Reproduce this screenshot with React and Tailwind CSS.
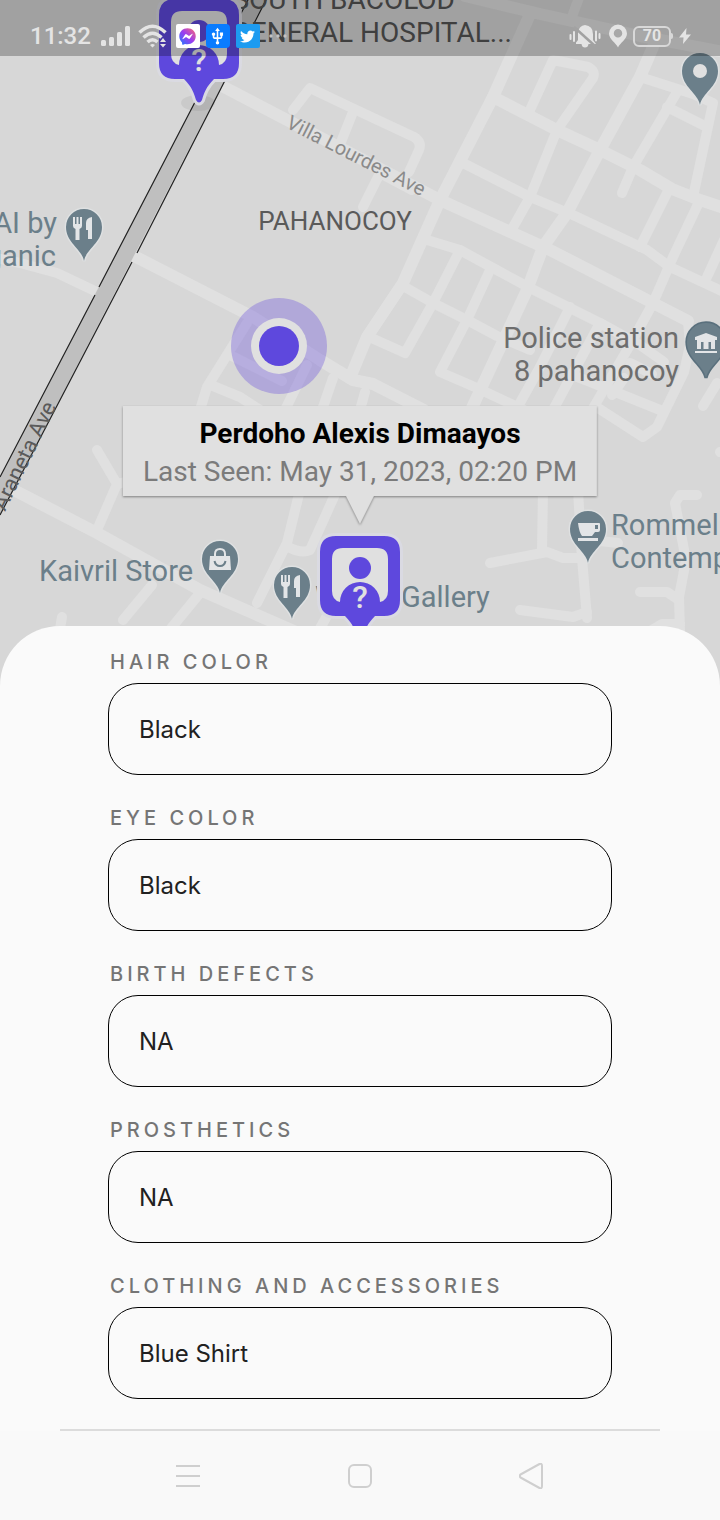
import React from "react";
import { FaFacebookMessenger, FaTwitter } from "react-icons/fa";
import { MdUsb } from "react-icons/md";

const fields = [
  { id: "hair", label: "HAIR COLOR", value: "Black" },
  { id: "eye", label: "EYE COLOR", value: "Black" },
  { id: "birth", label: "BIRTH DEFECTS", value: "NA" },
  { id: "prosthetics", label: "PROSTHETICS", value: "NA" },
  { id: "clothing", label: "CLOTHING AND ACCESSORIES", value: "Blue Shirt" },
];

const wideRoads = [
  "M531 12 L493 97 L440 200 L403 283 L367 337 L350 378",
  "M222 86 L440 200 L550 250 L653 303 L688 321",
  "M134 256 L253 317 L320 360 L353 380 L373 384 L424 410",
  "M465 -4 L540 14 L640 36 L724 52",
  "M493 97 L557 130 L600 150 L640 170 L672 189 L700 200 L724 208",
  "M653 47 L640 77 L600 150 L567 213 L543 247 L527 290 L471 410",
  "M8 487 L97 533 L200 590 L296 632",
];

const roads = [
  "M580 -5 L573 14",
  "M293 110 L310 88 L352 108 L414 137 Q422 142 419 150 L409 172",
  "M353 112 L341 142",
  "M412 190 L380 173 L363 207",
  "M530 110 L553 60 L588 67 Q596 71 593 78 L557 130 L530 197 L512 229",
  "M640 77 L693 94 L713 103 L693 197",
  "M677 92 L653 133 L633 167 L622 193",
  "M667 107 L707 127",
  "M463 163 L530 197 L573 215 L647 250 L670 267 L724 292",
  "M667 193 L640 247",
  "M700 200 L673 257 L653 303 L630 345 L592 410",
  "M724 240 L707 277",
  "M427 240 L460 250 L493 268 L530 288 L570 308 L600 323 L640 345 L664 362",
  "M403 286 L433 303 L467 320 L497 336 L530 350",
  "M460 250 L433 303 L405 353 L367 336",
  "M490 270 L467 320 L440 372 L477 388 L524 410",
  "M570 307 L540 367 L516 410",
  "M600 323 L553 410",
  "M575 376 L593 383 L660 410",
  "M630 363 L652 374",
  "M688 321 L690 345 L684 372 L657 427 L643 437 L598 408",
  "M612 395 L624 378",
  "M717 383 L703 406",
  "M247 323 L207 387 L200 410",
  "M232 356 L282 381",
  "M213 386 L240 397 L260 410",
  "M307 365 L285 410",
  "M333 378 L322 410",
  "M365 392 L360 410",
  "M-4 258 L20 263 L57 273 L97 292",
  "M97 450 L117 484 L97 530",
  "M117 484 L150 476",
  "M152 585 L123 620",
  "M200 593 L168 632",
  "M62 617 L58 640",
  "M300 490 L287 543 L257 603",
  "M337 490 L310 550 Q302 554 288 547",
  "M328 614 L318 632",
  "M543 490 L542 550",
  "M490 563 L547 552 L563 558 L582 558 L587 618",
  "M578 490 L582 560",
  "M520 610 L573 617 L587 612",
  "M600 541 L618 543",
  "M697 495 L680 495 L675 503 L686 560 L679 597 L680 632",
  "M640 592 L667 592 L679 600",
  "M652 630 L662 624 L680 624",
  "M720 452 L730 450",
];

const glyphs = {
  food: (
    <g fill="#e3e5e7">
      <path d="M-11 -10h2v7h1.500v-7h2v7h1.500v-7h2v9q0 2-2.500 3v11h-4v-11q-2.500-1-2.500-3z" />
      <path d="M8 -10v22h-4v-9h-2v-7q0-5 6-6z" />
    </g>
  ),
  bag: (
    <g>
      <path d="M-10 -3h20l1 14h-22z" fill="#e3e5e7" />
      <path d="M-5 -2v-3q0-5 5-5t5 5v3" fill="none" stroke="#e3e5e7" strokeWidth="2" />
      <path d="M-5.500 2q1 5 5.500 5t5.500-5" fill="none" stroke="#6b7f8a" strokeWidth="2" />
    </g>
  ),
  cup: (
    <g fill="#e3e5e7">
      <path d="M-10 -6h21q1 0 1 1v6q0 2-2 2h-3l-3 4h-10q-3-4-4-13zM7 -4v4h3v-4z" fillRule="evenodd" />
      <path d="M-10 9h20v3h-20z" />
    </g>
  ),
  bank: (
    <g fill="#e3e5e7">
      <path d="M-11 -5l11-4l11 4v3h-22zM-9 -2h4v9h-4zM-2.500 -2h5v9h-5zM5 -2h4v9h-4zM-9 5h3v2h-3zM-11 9h22v2h-22z" />
      <path d="M-5 -2h10v2h-10z" />
    </g>
  ),
  dot: <circle r="7" fill="#e0e0e0" />,
};

function PlacePin({ x, y, kind, large }) {
  return (
    <g transform={`translate(${x} ${y})`}>
      <g transform={large ? "scale(1.06)" : undefined}>
        <path
          d="M0 34C-2 22 -18 16 -18 0A18 18 0 0 1 18 0C18 16 2 22 0 34Z"
          fill="#6b7f8a"
          stroke={large ? "#5a707d" : "#dfe1e2"}
          strokeWidth="3"
          paintOrder="stroke"
        />
      </g>
      {glyphs[kind]}
    </g>
  );
}

function PersonMarker({ x, y }) {
  return (
    <g transform={`translate(${x} ${y})`}>
      <ellipse cx="-1" cy="104" rx="17" ry="8" fill="#000" opacity="0.06" />
      <path
        d="M-24 0H24Q40 0 40 16V64Q40 80 24 80H15C7 88 5 94 3 101Q0 106 -3 101C-5 94 -7 88 -15 80H-24Q-40 80 -40 64V16Q-40 0 -24 0Z"
        fill="#5e48dd"
        stroke="#dadae2"
        strokeWidth="6"
        paintOrder="stroke"
      />
      <path
        d="M-17 12H17Q28 12 28 23V55Q28 64 20 66A20 20 0 0 0 -20 66Q-28 64 -28 55V23Q-28 12 -17 12Z"
        fill="#e0e0e0"
      />
      <circle cx="0" cy="32" r="11" fill="#5e48dd" />
      <text y="72" textAnchor="middle" className="fill-[#e0e0e0] font-[Roboto,sans-serif] text-[32px] font-medium">
        ?
      </text>
    </g>
  );
}

function MapView() {
  return (
    <svg
      viewBox="0 0 720 690"
      preserveAspectRatio="xMidYMin slice"
      className="block h-full w-full font-[Roboto,sans-serif]"
      role="img"
      aria-label="Map of Pahanocoy"
    >
      <rect width="720" height="690" fill="#d7d7d7" />
      <g fill="none" stroke="#e0e0e0" strokeLinecap="round" strokeLinejoin="round">
        {roads.map((d) => (
          <path key={d} d={d} strokeWidth="10" />
        ))}
        {wideRoads.map((d) => (
          <path key={d} d={d} strokeWidth="12" />
        ))}
      </g>
      <path d="M248 0H266L0 515V477Z" fill="#bfbfbf" />
      <path
        d="M248 0L99 287M95 295L0 477M266 0L137 253M132 262L0 515"
        fill="none"
        stroke="#222"
        strokeWidth="1.200"
      />

      <text transform="translate(285 127) rotate(27)" className="fill-[#8a8a8a] text-[20px]">
        Villa Lourdes Ave
      </text>
      <text transform="translate(5 512) rotate(-64)" className="fill-[#5a5a5a] text-[22px]">
        Araneta Ave
      </text>
      <g className="fill-[#555] text-[28px]">
        <text x="455" y="9" textAnchor="end">SOUTH BACOLOD</text>
        <text x="512" y="42" textAnchor="end">GENERAL HOSPITAL...</text>
      </g>
      <g className="text-[29px]">
        <g className="fill-[#6d6d6d]">
          <text x="679" y="348" textAnchor="end">Police station</text>
          <text x="679" y="381" textAnchor="end">8 pahanocoy</text>
        </g>
        <g className="fill-[#6b7f8a]">
          <text x="57" y="233" textAnchor="end">AI by</text>
          <text x="56" y="266" textAnchor="end">ganic</text>
          <text x="39" y="581">Kaivril Store</text>
          <text x="611" y="535">Rommel</text>
          <text x="611" y="568">Contemp</text>
          <text x="315" y="607">W</text>
          <text x="401" y="607">Gallery</text>
        </g>
      </g>
      <text x="335" y="230" textAnchor="middle" className="fill-[#5a5a5a] text-[26px]">
        PAHANOCOY
      </text>

      <PlacePin x={84} y={227} kind="food" />
      <PlacePin x={220} y={559} kind="bag" />
      <PlacePin x={292} y={585} kind="food" />
      <PlacePin x={588} y={529} kind="cup" />
      <PlacePin x={700} y={71} kind="dot" />
      <PlacePin x={706} y={342} kind="bank" large />

      <circle cx="279" cy="346" r="48" fill="#6a4fdd" opacity="0.35" />
      <circle cx="279" cy="346" r="28" fill="#e0e0e0" />
      <circle cx="279" cy="346" r="20" fill="#5e48dd" />

      <PersonMarker x={199} y={-1} />
      <PersonMarker x={360} y={536} />
    </svg>
  );
}

function SignalIcon() {
  return (
    <svg viewBox="0 0 30 22" className="h-[22px] w-[30px]" fill="#e4e4e4" aria-hidden="true">
      <rect x="0" y="15" width="5" height="6" rx="1.500" />
      <rect x="8" y="12" width="5" height="9" rx="1.500" />
      <rect x="16" y="7" width="5" height="14" rx="1.500" />
      <rect x="24" y="1" width="5" height="20" rx="1.500" />
    </svg>
  );
}

function WifiIcon() {
  return (
    <svg viewBox="0 0 30 24" className="h-6 w-[30px]" fill="none" stroke="#e4e4e4" strokeWidth="3.500" aria-hidden="true">
      <path d="M1.500 8.500Q14.500 -4 27.500 8.500M5.500 13.500Q14.500 5 23.500 13.500M9.500 18Q14.500 13.500 19.500 18" />
      <path d="M12 21Q14.500 19 17 21L14.500 23.500ZM22 18l3-4l3 4zM22 20h6l-3 3.500z" fill="#e4e4e4" stroke="none" />
    </svg>
  );
}

function SilentIcon() {
  return (
    <svg viewBox="0 0 32 24" className="h-6 w-8" aria-hidden="true">
      <path
        d="M16 1Q24 2 24 10V16L27 20H19.500Q19 23.500 16 23.500T12.500 20H7V18.500L9 16V8Q10 2 16 1Z"
        fill="#e4e4e4"
      />
      <path d="M5 3L26 22" stroke="#a2a2a2" strokeWidth="2.500" />
      <path d="M1.500 11v4M5 8v9M27 7.500v9M30.500 10v4" stroke="#e4e4e4" strokeWidth="2" strokeLinecap="round" />
    </svg>
  );
}

function StatusBar() {
  return (
    <header className="absolute inset-x-0 top-0 flex h-14 items-center justify-between bg-black/25 pt-4 pr-[29px] pl-[30px] font-[Roboto,sans-serif]">
      <div className="flex items-center">
        <span className="text-2xl font-medium text-[#e4e4e4]">11:32</span>
        <div className="ml-2.5 flex items-center gap-[7px]">
          <SignalIcon />
          <WifiIcon />
        </div>
        <div className="ml-2 flex items-center gap-1.5">
          <span className="flex size-6 items-center justify-center rounded-xs bg-white">
            <FaFacebookMessenger className="size-[17px]" fill="url(#messenger)" />
            <svg className="absolute size-0" aria-hidden="true">
              <linearGradient id="messenger" x1="0" y1="1" x2="1" y2="0">
                <stop offset="0" stopColor="#1b7dff" />
                <stop offset="0.5" stopColor="#9b3df0" />
                <stop offset="1" stopColor="#ff6a70" />
              </linearGradient>
            </svg>
          </span>
          <span className="flex size-6 items-center justify-center rounded bg-[#0a7cff] text-white">
            <MdUsb className="size-[19px]" />
          </span>
          <span className="flex size-6 items-center justify-center rounded-xs bg-[#1d9bf0] text-white">
            <FaTwitter className="size-[15px]" />
          </span>
        </div>
        <svg viewBox="0 0 20 4" className="ml-2 h-1 w-5" fill="#c2c2c2" aria-hidden="true">
          <circle cx="3" cy="2" r="1.700" />
          <circle cx="10" cy="2" r="1.700" />
          <circle cx="17" cy="2" r="1.700" />
        </svg>
      </div>
      <div className="flex items-center">
        <SilentIcon />
        <svg viewBox="0 0 18 24" className="ml-2 h-6 w-[18px]" aria-hidden="true">
          <path
            d="M9 23.500C7 19 0 15 0 9.500A9 9 0 0 1 18 9.500C18 15 11 19 9 23.500ZM9 5A4.200 4.200 0 1 0 9 13.500A4.200 4.200 0 1 0 9 5Z"
            fill="#e4e4e4"
            fillRule="evenodd"
          />
        </svg>
        <span className="ml-1.5 flex h-[21px] w-[38px] items-center justify-center rounded-md border-2 border-[#d8d8d8] text-base font-bold text-[#e4e4e4]">
          70
        </span>
        <span className="h-1.5 w-0.5 rounded-r bg-[#d8d8d8]" />
        <svg viewBox="0 0 12 16" className="ml-1.5 h-4 w-3" fill="#e4e4e4" aria-hidden="true">
          <path d="M7.500 0L0 9.500H4.500L4 16L12 6.500H7Z" />
        </svg>
      </div>
    </header>
  );
}

function InfoWindow() {
  return (
    <div className="absolute top-[406px] left-1/2 -translate-x-1/2 drop-shadow-[0_1px_1px_rgba(0,0,0,0.4)]">
      <div className="flex h-[90px] flex-col items-center bg-[#e0e0e0] px-5 pt-[9px] font-[Roboto,sans-serif] text-[28px] leading-[38px] whitespace-nowrap">
        <strong className="font-bold text-black">Perdoho Alexis Dimaayos</strong>
        <span className="text-[#7b7b7b]">Last Seen: May 31, 2023, 02:20 PM</span>
      </div>
      <svg viewBox="0 0 28 28" className="mx-auto -mb-7 block size-7" aria-hidden="true">
        <path d="M0 0H28L14 28Z" fill="#e0e0e0" />
      </svg>
    </div>
  );
}

function Field({ id, label, value }) {
  return (
    <div className="flex flex-col">
      <label htmlFor={id} className="pl-0.5 text-xl leading-[25px] font-medium tracking-[4px] text-[#757575]">
        {label}
      </label>
      <input
        id={id}
        defaultValue={value}
        className="mt-2 h-[92px] w-full rounded-[30px] border border-black bg-transparent px-[30px] text-2xl text-[#212121] outline-none"
      />
    </div>
  );
}

function NavBar() {
  return (
    <nav className="flex h-[89px] items-center justify-center gap-[146px] bg-[#f9f9f9]">
      <button type="button" aria-label="Recent apps">
        <svg viewBox="0 0 26 26" className="size-[26px]" stroke="#cfcfcf" strokeWidth="2" aria-hidden="true">
          <path d="M1 3h24M1 13h24M1 23h24" />
        </svg>
      </button>
      <button type="button" aria-label="Home">
        <svg viewBox="0 0 26 26" className="size-[26px]" fill="none" stroke="#cfcfcf" strokeWidth="2" aria-hidden="true">
          <rect x="2" y="2" width="22" height="22" rx="5" />
        </svg>
      </button>
      <button type="button" aria-label="Back">
        <svg
          viewBox="0 0 26 26"
          className="size-[26px]"
          fill="none"
          stroke="#cfcfcf"
          strokeWidth="2"
          strokeLinejoin="round"
          aria-hidden="true"
        >
          <path d="M1.500 11.500L20.500 1Q23 0 23 3V23Q23 26 20.500 25L1.500 14.500Q0 13 1.500 11.500Z" />
        </svg>
      </button>
    </nav>
  );
}

export default function App() {
  return (
    <div className="min-h-screen bg-[#fafafa]">
      <div className="relative h-[690px] overflow-hidden">
        <MapView />
        <InfoWindow />
        <StatusBar />
      </div>
      <main className="relative -mt-16 rounded-t-[60px] bg-[#fafafa] pt-6 font-[Inter,sans-serif]">
        <form className="mx-auto flex w-[70%] flex-col gap-[31px]">
          {fields.map((field) => (
            <Field key={field.id} {...field} />
          ))}
        </form>
        <hr className="mx-[60px] mt-[30px] border-t-2 border-[#dcdcdc]" />
      </main>
      <NavBar />
    </div>
  );
}
